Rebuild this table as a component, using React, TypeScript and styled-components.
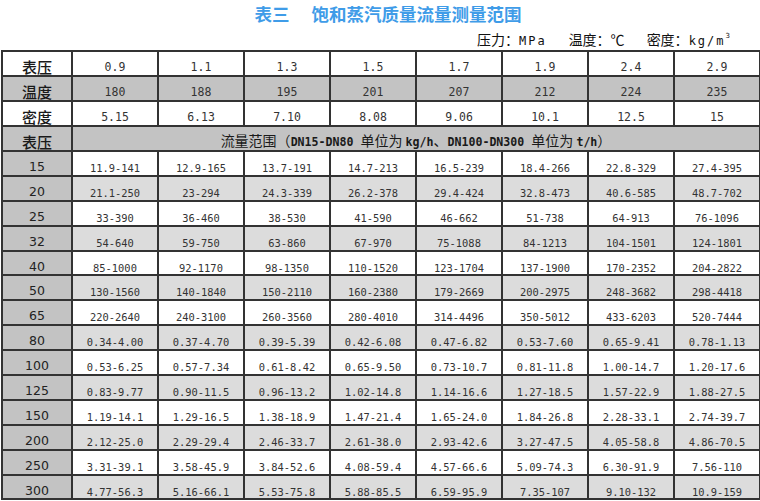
import styled, { createGlobalStyle } from "styled-components";

const GlobalStyle = createGlobalStyle`
  html, body {
    margin: 0;
    padding: 0;
    background: #ffffff;
  }
  body {
    font-family: "Noto Sans CJK SC", "DejaVu Sans", sans-serif;
    color: #222;
  }
`;

type Tone = "head" | "white" | "light";

const toneColor: Record<Tone, string> = {
  head: "#c3c3c3",
  white: "#ffffff",
  light: "#dcdcdc",
};

const Page = styled.div`
  width: 760px;
  height: 501px;
  overflow: hidden;
`;

const Title = styled.h1`
  margin: 0;
  height: 28px;
  line-height: 28px;
  padding-left: 16px;
  text-align: center;
  font-size: 17.5px;
  font-weight: 700;
  color: #3f9ce8;
  font-family: "Noto Sans CJK SC", sans-serif;
`;

const TitleGap = styled.span`
  display: inline-block;
  width: 22px;
`;

const Units = styled.div`
  height: 22px;
  line-height: 22px;
  text-align: right;
  padding-right: 30px;
  font-size: 14px;
  color: #111;
  white-space: nowrap;
  overflow: hidden;
`;

const UnitItem = styled.span`
  margin-left: 22px;
`;

const Latin = styled.span`
  font-family: "DejaVu Sans Mono", monospace;
  font-size: 12px;
  letter-spacing: 2px;
`;

const Sup = styled.span`
  font-family: "DejaVu Sans", sans-serif;
  font-size: 7px;
  vertical-align: 7px;
  line-height: 0;
`;

const Table = styled.table`
  margin-left: 1px;
  width: 758px;
  table-layout: fixed;
  border-collapse: separate;
  border-spacing: 0;
  border: 1px solid #333;
`;

const Row = styled.tr`
  height: 24.9px;
`;

const Cell = styled.td<{ $tone: Tone }>`
  height: 24.9px;
  padding: 10px 0 0;
  box-sizing: border-box;
  border: 1px solid #333;
  background: ${(p) => toneColor[p.$tone]};
  text-align: center;
  vertical-align: top;
  white-space: nowrap;
  overflow: hidden;
  color: #333;
  font-family: "DejaVu Sans Mono", monospace;
  font-size: 10.4px;
  line-height: 12px;
`;

const LabelCell = styled(Cell)`
  font-family: "Noto Sans CJK SC", sans-serif;
  font-size: 15px;
  font-weight: 500;
  color: #1a1a1a;
  padding-top: 7px;
  line-height: 16px;
`;

const SizeCell = styled(Cell)`
  font-family: "DejaVu Sans", sans-serif;
  font-size: 12.5px;
  color: #222;
  padding-top: 7px;
  line-height: 15px;
`;

const TopValue = styled(Cell)`
  font-size: 11.5px;
  padding-top: 9px;
  line-height: 13px;
`;

const RangeCell = styled(Cell)`
  font-family: "Noto Sans CJK SC", sans-serif;
  font-size: 14px;
  color: #1a1a1a;
  padding-top: 6px;
  line-height: 15px;
`;

const RangeLatin = styled.span`
  font-family: "DejaVu Sans Mono", monospace;
  font-size: 11.6px;
  font-weight: 700;
  line-height: 10px;
`;

const pressures = ["0.9", "1.1", "1.3", "1.5", "1.7", "1.9", "2.4", "2.9"];
const temps = ["180", "188", "195", "201", "207", "212", "224", "235"];
const densities = ["5.15", "6.13", "7.10", "8.08", "9.06", "10.1", "12.5", "15"];

const flows: [string, string[]][] = [
  ["15", ["11.9-141", "12.9-165", "13.7-191", "14.7-213", "16.5-239", "18.4-266", "22.8-329", "27.4-395"]],
  ["20", ["21.1-250", "23-294", "24.3-339", "26.2-378", "29.4-424", "32.8-473", "40.6-585", "48.7-702"]],
  ["25", ["33-390", "36-460", "38-530", "41-590", "46-662", "51-738", "64-913", "76-1096"]],
  ["32", ["54-640", "59-750", "63-860", "67-970", "75-1088", "84-1213", "104-1501", "124-1801"]],
  ["40", ["85-1000", "92-1170", "98-1350", "110-1520", "123-1704", "137-1900", "170-2352", "204-2822"]],
  ["50", ["130-1560", "140-1840", "150-2110", "160-2380", "179-2669", "200-2975", "248-3682", "298-4418"]],
  ["65", ["220-2640", "240-3100", "260-3560", "280-4010", "314-4496", "350-5012", "433-6203", "520-7444"]],
  ["80", ["0.34-4.00", "0.37-4.70", "0.39-5.39", "0.42-6.08", "0.47-6.82", "0.53-7.60", "0.65-9.41", "0.78-1.13"]],
  ["100", ["0.53-6.25", "0.57-7.34", "0.61-8.42", "0.65-9.50", "0.73-10.7", "0.81-11.8", "1.00-14.7", "1.20-17.6"]],
  ["125", ["0.83-9.77", "0.90-11.5", "0.96-13.2", "1.02-14.8", "1.14-16.6", "1.27-18.5", "1.57-22.9", "1.88-27.5"]],
  ["150", ["1.19-14.1", "1.29-16.5", "1.38-18.9", "1.47-21.4", "1.65-24.0", "1.84-26.8", "2.28-33.1", "2.74-39.7"]],
  ["200", ["2.12-25.0", "2.29-29.4", "2.46-33.7", "2.61-38.0", "2.93-42.6", "3.27-47.5", "4.05-58.8", "4.86-70.5"]],
  ["250", ["3.31-39.1", "3.58-45.9", "3.84-52.6", "4.08-59.4", "4.57-66.6", "5.09-74.3", "6.30-91.9", "7.56-110"]],
  ["300", ["4.77-56.3", "5.16-66.1", "5.53-75.8", "5.88-85.5", "6.59-95.9", "7.35-107", "9.10-132", "10.9-159"]],
];

function App() {
  return (
    <Page>
      <GlobalStyle />
      <Title>
        表三<TitleGap />饱和蒸汽质量流量测量范围
      </Title>
      <Units>
        <UnitItem>
          压力：<Latin>MPa</Latin>
        </UnitItem>
        <UnitItem>温度：℃</UnitItem>
        <UnitItem>
          密度：<Latin>kg/m</Latin>
          <Sup>3</Sup>
        </UnitItem>
      </Units>
      <Table>
        <colgroup>
          <col style={{ width: 70 }} />
          {pressures.map((p) => (
            <col key={p} style={{ width: 86 }} />
          ))}
        </colgroup>
        <tbody>
          <Row>
            <LabelCell $tone="white">表压</LabelCell>
            {pressures.map((v) => (
              <TopValue key={v} $tone="white">{v}</TopValue>
            ))}
          </Row>
          <Row>
            <LabelCell $tone="head">温度</LabelCell>
            {temps.map((v) => (
              <TopValue key={v} $tone="head">{v}</TopValue>
            ))}
          </Row>
          <Row>
            <LabelCell $tone="white">密度</LabelCell>
            {densities.map((v) => (
              <TopValue key={v} $tone="white">{v}</TopValue>
            ))}
          </Row>
          <Row>
            <LabelCell $tone="head">表压</LabelCell>
            <RangeCell $tone="head" colSpan={8}>
              流量范围（<RangeLatin>DN15-DN80 </RangeLatin>单位为 <RangeLatin>kg/h</RangeLatin>、
              <RangeLatin>DN100-DN300 </RangeLatin>单位为 <RangeLatin>t/h</RangeLatin>）
            </RangeCell>
          </Row>
          {flows.map(([size, values], i) => {
            const tone: Tone = i % 2 === 0 ? "white" : "light";
            return (
              <Row key={size}>
                <SizeCell $tone="head">{size}</SizeCell>
                {values.map((v, j) => (
                  <Cell key={j} $tone={tone}>{v}</Cell>
                ))}
              </Row>
            );
          })}
        </tbody>
      </Table>
    </Page>
  );
}

export default App;
